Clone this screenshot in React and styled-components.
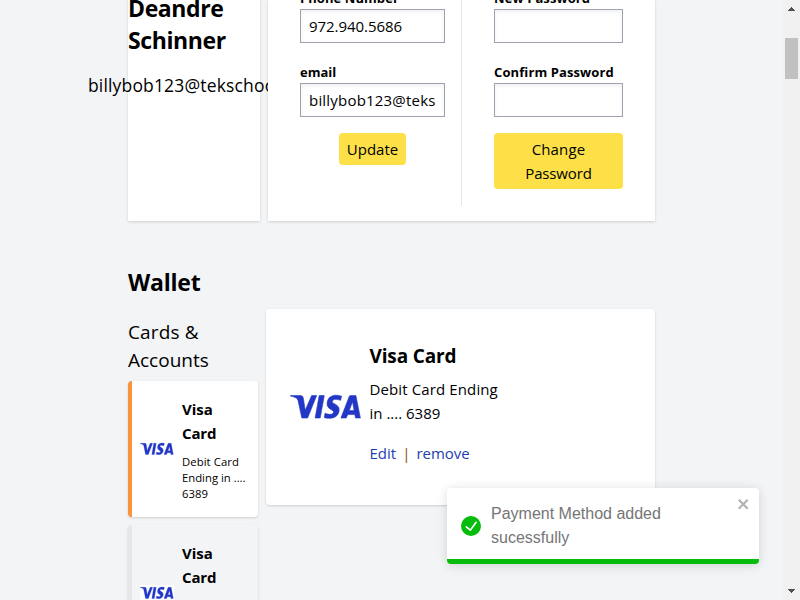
import React from "react";
import styled, { createGlobalStyle } from "styled-components";

const Global = createGlobalStyle`
  *, *::before, *::after { box-sizing: border-box; }
  html, body { margin: 0; padding: 0; overflow: hidden; }
  body { background: #f3f4f6; color: #000; font-family: "Open Sans", "Noto Sans", sans-serif; }
  h1, h2, h3, p { margin: 0; }
`;

const Window = styled.div`
  display: flex;
  width: 800px;
  height: 600px;
  overflow: hidden;
`;

const Page = styled.main`
  flex: 1;
  height: 600px;
  padding-left: 128px;
  overflow: hidden;
`;

const Scrollbar = styled.aside`
  display: flex;
  flex-direction: column;
  align-items: center;
  justify-content: space-between;
  width: 17px;
  height: 600px;
  padding: 7px 0 7px;
  background: #f1f1f1;
`;

const Thumb = styled.div`
  width: 13px;
  height: 41px;
  margin: 27px 0 auto;
  background: #c1c1c1;
`;

const Arrow = styled.svg`
  display: block;
  width: 7px;
  height: 4px;
  fill: #505050;
`;

/* A run of text; $s size, $w weight, $h line height, $ls tracking, $dy baseline shift. */
const Text = styled.span`
  display: block;
  font-size: ${(p) => p.$s}px;
  font-weight: ${(p) => p.$w || 400};
  line-height: ${(p) => p.$h}px;
  letter-spacing: ${(p) => p.$ls || 0}px;
  color: ${(p) => p.$c || "inherit"};
  white-space: nowrap;
  transform: translateY(${(p) => p.$dy ?? 0}px);
`;

const Profile = styled.section`
  display: flex;
  gap: 8px;
  height: 221px;
`;

const Panel = styled.div`
  background: #fff;
  box-shadow: 0 1px 3px rgba(0, 0, 0, 0.1), 0 1px 2px rgba(0, 0, 0, 0.06);
`;

const Identity = styled(Panel)`
  width: 132px;
  margin-top: -8px;
`;

const Email = styled.div`
  width: 180px;
  margin: 15px 0 0 -40px;
  overflow: hidden;
`;

const Settings = styled(Panel)`
  display: flex;
  width: 387px;
  height: 221px;
  padding: 0 32px 16px;
`;

const Column = styled.div`
  display: flex;
  flex-direction: column;
  align-items: center;
  width: ${(p) => p.$width}px;
  height: 206px;
  padding-right: ${(p) => (p.$divided ? 16 : 0)}px;
  margin-right: ${(p) => (p.$divided ? 32 : 0)}px;
  border-right: ${(p) => (p.$divided ? "1px solid #e5e7eb" : "0")};
`;

const Field = styled.label`
  display: block;
  width: 100%;
  margin-top: ${(p) => p.$top}px;
`;

const Input = styled.div`
  height: 34px;
  padding: 4px 8px;
  overflow: hidden;
  background: #fff;
  border: 1px solid #9ca3af;
  box-shadow: inset 0 2px 4px rgba(0, 0, 0, 0.06);
`;

const Button = styled.button`
  display: flex;
  flex-direction: column;
  align-items: center;
  width: ${(p) => p.$width}px;
  margin-top: 16px;
  padding: 4px 0;
  border: 0;
  border-radius: 4px;
  background: #fde047;
  color: #000;
  font-family: inherit;
`;

const Wallet = styled.section`
  width: 527px;
  padding-top: 46px;
`;

const WalletBody = styled.div`
  display: flex;
  gap: 8px;
  margin-top: 10px;
`;

const Accounts = styled.div`
  width: 130px;
  padding-top: 9px;
`;

const AccountCard = styled.div`
  display: flex;
  align-items: center;
  gap: 8px;
  width: 130px;
  height: 136px;
  margin-top: ${(p) => (p.$active ? 7 : 8)}px;
  padding-left: 8px;
  border-left: 4px solid ${(p) => (p.$active ? "#fb923c" : "#e5e7eb")};
  border-radius: 4px;
  background: ${(p) => (p.$active ? "#fff" : "#f3f4f6")};
  box-shadow: 0 1px 3px rgba(0, 0, 0, 0.1), 0 1px 2px rgba(0, 0, 0, 0.06);
`;

const AccountInfo = styled.div`
  padding-top: 0;
`;

const SmallLines = styled.div`
  margin-top: 8px;
`;

const Detail = styled.div`
  display: flex;
  align-items: center;
  gap: 7.5px;
  width: 389px;
  height: 196px;
  padding-left: 24px;
  border-radius: 4px;
  background: #fff;
  box-shadow: 0 1px 3px rgba(0, 0, 0, 0.1), 0 1px 2px rgba(0, 0, 0, 0.06);
`;

const DetailInfo = styled.div`
  height: 132px;
  padding-top: 2px;
`;

const DetailLines = styled.div`
  margin-top: 6px;
`;

const Actions = styled.div`
  display: flex;
  gap: 6px;
  margin-top: 16px;
`;

const Logo = styled.svg`
  display: block;
  width: ${(p) => p.$width}px;
  height: ${(p) => p.$height}px;
  background: #fff;
`;

const Toast = styled.div`
  position: absolute;
  left: 447px;
  top: 488px;
  display: flex;
  width: 312px;
  height: 76px;
  padding: 14px 8px 0 14px;
  overflow: hidden;
  border-radius: 4px;
  background: linear-gradient(#07bc0c, #07bc0c) bottom / 100% 5px no-repeat #fff;
  color: #757575;
  font-family: "Liberation Sans", Arial, sans-serif;
  box-shadow: 0 1px 10px rgba(0, 0, 0, 0.1), 0 2px 15px rgba(0, 0, 0, 0.05);
`;

const Check = styled.svg`
  width: 20px;
  height: 20px;
  margin: 14px 10px 0 0;
`;

const Message = styled.div`
  flex: 1;
`;

const Close = styled.svg`
  width: 14px;
  height: 16px;
  margin-top: -6px;
  fill: #b2b2b2;
`;

const Visa = ({ width, height }) => (
  <Logo $width={width} $height={height} viewBox="0 0 72 32" preserveAspectRatio="none">
    <g fill="#2337c6" stroke="#2337c6" strokeWidth="0.6">
      <path d="M.5 4.6H10.6q2.2 0 2.7 2.3l1.9 12.4L21.6 4.6h5.1L17.6 27h-5.8L8 9.5Q7.6 7.8 6.2 7 4 5.8.5 5.1Z" />
      <path d="M29.2 4.6h5.1L30.2 27h-5.1Z" />
      <path d="M51.6 5.2 50.6 9.3q-7.8-2.3-8.3 1.1c-.1 2.6 7.8 2.8 6.8 9.5-1.1 7.3-9.2 8.6-14.9 6.6l.9-4.3c3.6 1.7 8.2 1.7 8.4-1.1.2-2.6-7.2-2.8-6.4-9.2C37.8 4.3 45.5 3 51.6 5.2Z" />
      <path fillRule="evenodd" d="M60.5 4.6h5.4L70.4 27h-4.9l-.7-3.4h-7L56.2 27h-5.3L59 6Q59.4 4.6 60.5 4.6ZM62.5 10.8l-3.2 8.8h4.8Z" />
    </g>
  </Logo>
);

const accounts = [{ active: true }, { active: false }];

export default function App() {
  return (
    <>
      <Global />
      <Window>
        <Page>
          <Profile>
            <Identity>
              <Text as="h2" $s={23} $w={700} $h={32} $ls={-0.4}>Deandre</Text>
              <Text as="h2" $s={23} $w={700} $h={32} $ls={-0.4}>Schinner</Text>
              <Email>
                <Text $s={17.5} $h={28} $ls={0.16} $w={500}>billybob123@tekschool.com</Text>
              </Email>
            </Identity>
            <Settings>
              <Column $width={162} $divided>
                <Field $top={-11}>
                  <Text $s={13} $w={700} $h={20} $dy={-1} $ls={0.07}>Phone Number</Text>
                  <Input><Text $s={15} $h={24} $ls={-0.05}>972.940.5686</Text></Input>
                </Field>
                <Field $top={20}>
                  <Text $s={13} $w={700} $h={20} $dy={-1}>email</Text>
                  <Input><Text $s={15} $h={24} $ls={0.2}>billybob123@teks</Text></Input>
                </Field>
                <Button $width={67}><Text $s={15} $h={24}>Update</Text></Button>
              </Column>
              <Column $width={129}>
                <Field $top={-11}>
                  <Text $s={13} $w={700} $h={20} $dy={-1} $ls={0.1}>New Password</Text>
                  <Input />
                </Field>
                <Field $top={20}>
                  <Text $s={13} $w={700} $h={20} $dy={-1} $ls={0.1}>Confirm Password</Text>
                  <Input />
                </Field>
                <Button $width={129}>
                  <Text $s={15} $h={24} $ls={0.15}>Change</Text>
                  <Text $s={15} $h={24} $ls={-0.15}>Password</Text>
                </Button>
              </Column>
            </Settings>
          </Profile>
          <Wallet>
            <Text as="h1" $s={23} $w={700} $h={32} $ls={-0.2} $dy={-1}>Wallet</Text>
            <WalletBody>
              <Accounts>
                <Text $s={19} $h={28} $ls={0.15}>Cards &amp;</Text>
                <Text $s={19} $h={28}>Accounts</Text>
                {accounts.map((a, i) => (
                  <AccountCard key={i} $active={a.active}>
                    <Visa width={34} height={16} />
                    <AccountInfo>
                      <Text $s={15} $w={700} $h={24}>Visa</Text>
                      <Text $s={15} $w={700} $h={24} $ls={-0.15}>Card</Text>
                      <SmallLines>
                        <Text $s={11.3} $h={16} $dy={1} $ls={0.08}>Debit Card</Text>
                        <Text $s={11.3} $h={16} $dy={1}>Ending in ....</Text>
                        <Text $s={11.3} $h={16} $dy={1}>6389</Text>
                      </SmallLines>
                    </AccountInfo>
                  </AccountCard>
                ))}
              </Accounts>
              <Detail>
                <Visa width={72} height={32} />
                <DetailInfo>
                  <Text as="h3" $s={19} $w={700} $h={28} $dy={-1} $ls={-0.15}>Visa Card</Text>
                  <DetailLines>
                    <Text $s={15} $h={24} $ls={0.12}>Debit Card Ending</Text>
                    <Text $s={15} $h={24}>in .... 6389</Text>
                  </DetailLines>
                  <Actions>
                    <Text $s={15} $h={24} $c="#1e40af">Edit</Text>
                    <Text $s={15} $h={24} $c="#854d0e">|</Text>
                    <Text $s={15} $h={24} $c="#1e40af">remove</Text>
                  </Actions>
                </DetailInfo>
              </Detail>
            </WalletBody>
          </Wallet>
        </Page>
        <Scrollbar>
          <Arrow viewBox="0 0 7 4" shapeRendering="crispEdges"><path d="M3 0h1v1h1v1h1v1h1v1H0V3h1V2h1V1h1Z" /></Arrow>
          <Thumb />
          <Arrow viewBox="0 0 7 4" shapeRendering="crispEdges"><path d="M0 0h7v1H6v1H5v1H4v1H3V3H2V2H1V1H0Z" /></Arrow>
        </Scrollbar>
      </Window>
      <Toast>
        <Check viewBox="0 0 24 24"><path fill="#07bc0c" d="M12 0a12 12 0 1012 12A12.014 12.014 0 0012 0zm6.927 8.2l-6.845 9.289a1.011 1.011 0 01-1.43.188l-4.888-3.908a1 1 0 111.25-1.562l4.076 3.261 6.227-8.451a1 1 0 111.61 1.183z" /></Check>
        <Message>
          <Text $s={16} $h={24}>Payment Method added</Text>
          <Text $s={16} $h={24}>sucessfully</Text>
        </Message>
        <Close viewBox="0 0 14 16"><path fillRule="evenodd" d="M7.71 8.23l3.75 3.75-1.48 1.48-3.75-3.75-3.75 3.75L1 11.98l3.75-3.75L1 4.48 2.48 3l3.75 3.75L9.98 3l1.48 1.48-3.75 3.75z" /></Close>
      </Toast>
    </>
  );
}
